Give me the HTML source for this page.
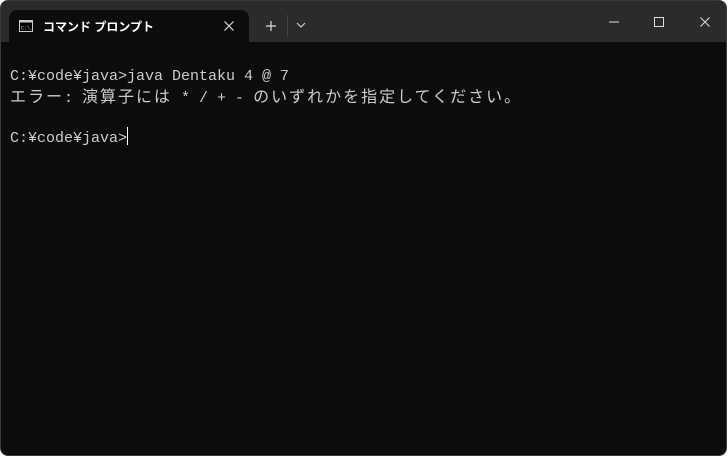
<!DOCTYPE html>
<html><head><meta charset="utf-8"><style>
html,body{margin:0;padding:0;background:#fff;width:728px;height:457px;overflow:hidden}
.win{position:absolute;left:0;top:0;width:727px;height:456px;background:#0c0c0c;border-radius:8px;overflow:hidden;border:1px solid #3a3a3a;box-sizing:border-box}
.bar{position:absolute;left:0;top:0;width:100%;height:41px;background:#2b2b2b}
.tab{position:absolute;left:8px;top:9px;width:240px;height:32px;background:#0c0c0c;border-radius:8px 8px 0 0}
.t{font-family:"Liberation Sans","Noto Sans CJK JP",sans-serif;color:#fff;font-size:12px;position:absolute;left:34px;top:8px;font-weight:bold}
.term{position:absolute;left:9px;top:66px;font-family:"Liberation Mono","Noto Sans CJK JP",monospace;font-size:15px;color:#cccccc;white-space:pre}
.term div{height:20px;line-height:20px;overflow:visible}
.j{font-family:"Noto Sans CJK JP",sans-serif;font-size:16px;letter-spacing:2px;line-height:0}
.cur{display:inline-block;width:1px;height:18px;background:#fff;vertical-align:-3px}
svg{position:absolute}
</style></head><body>
<div class="win">
<div class="bar">
<div class="tab">
<svg style="left:10px;top:10px" width="14" height="12" viewBox="0 0 14 12"><rect x="0.5" y="0.5" width="13" height="11" fill="#000" stroke="#ccc"/><rect x="0.5" y="0.5" width="13" height="2" fill="#ccc"/><text x="2" y="9.5" font-size="5" fill="#ddd" font-family="Liberation Mono">C:\_</text></svg>
<div class="t">コマンド プロンプト</div>
<svg style="left:214px;top:10px" width="12" height="12"><path d="M1.5 1.5L10.5 10.5M10.5 1.5L1.5 10.5" stroke="#ddd" stroke-width="1.2"/></svg>
</div>
<svg style="left:264px;top:19px" width="12" height="12"><path d="M6 1V11M1 6H11" stroke="#ddd" stroke-width="1.2"/></svg>
<div style="position:absolute;left:286px;top:14px;width:1px;height:22px;background:#444"></div>
<svg style="left:295px;top:21px" width="10" height="6"><path d="M1 1L5 5L9 1" stroke="#ccc" stroke-width="1.2" fill="none"/></svg>
<svg style="left:607px;top:20px" width="12" height="2"><path d="M1 1H11" stroke="#ddd" stroke-width="1"/></svg>
<svg style="left:652px;top:15px" width="12" height="12"><rect x="1.5" y="1.5" width="9" height="9" fill="none" stroke="#ddd" stroke-width="1"/></svg>
<svg style="left:698px;top:15px" width="12" height="12"><path d="M1.5 1.5L10.5 10.5M10.5 1.5L1.5 10.5" stroke="#ddd" stroke-width="1"/></svg>
</div>
<div class="term"><div>C:¥code¥java&gt;java Dentaku 4 @ 7</div><div style="margin-top:2px"><span class="j">エラー</span>: <span class="j">演算子には</span> * / + - <span class="j">のいずれかを指定してください。</span></div><div></div><div style="margin-top:-2px">C:¥code¥java&gt;<span class="cur"></span></div></div>
</div>
</body></html>
